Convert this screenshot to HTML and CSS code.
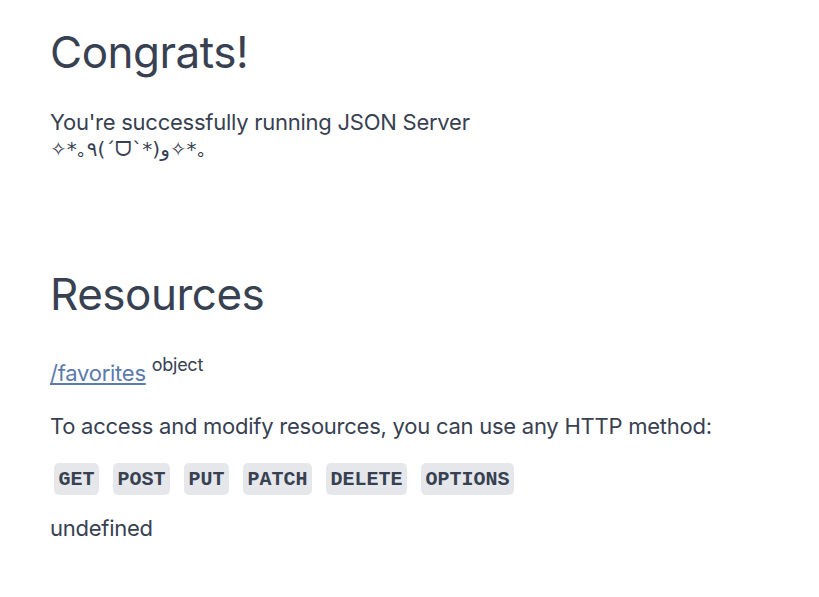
FILE: index.html
```
<!DOCTYPE html>
<html lang="en">
<head>
<meta charset="utf-8">
<title>JSON Server</title>
<link rel="stylesheet" href="styles.css">
</head>
<body>
<main class="page">
  <h1 class="title">Congrats!</h1>
  <p class="lead">You're successfully running JSON Server<br><span class="kaomoji">✧*｡٩(ˊᗜˋ*)و✧*｡</span></p>
  <h2 class="title section">Resources</h2>
  <p class="resource"><a class="link" href="favorites">/favorites</a> <sup class="type">object</sup></p>
  <p class="text access">To access and modify resources, you can use any HTTP method:</p>
  <div class="methods">
    <code class="method">GET</code>
    <code class="method">POST</code>
    <code class="method">PUT</code>
    <code class="method">PATCH</code>
    <code class="method">DELETE</code>
    <code class="method">OPTIONS</code>
  </div>
  <p class="text last">undefined</p>
</main>
</body>
</html>
```
FILE: styles.css
```
html, body {
  margin: 0;
  padding: 0;
  background: #ffffff;
}
body {
  font-family: Inter, "Noto Sans", "DejaVu Sans", sans-serif;
  color: #374151;
  font-size: 22px;
  line-height: 26px;
  letter-spacing: -0.25px;
}
.page {
  padding: 0 50px;
}
.title {
  font-size: 44px;
  font-weight: 400;
  line-height: 52.8px;
  letter-spacing: -0.5px;
  margin: 26px 0 0;
}
.section {
  margin-top: 107px;
}
.lead {
  margin: 30px 0 0;
}
.kaomoji {
  font-family: "DejaVu Sans", "Noto Sans", sans-serif;
  font-size: 20px;
  line-height: 20px;
  letter-spacing: 0;
}
.resource {
  margin: 39px 0 0;
}
.link {
  color: #5b7aae;
  text-decoration: underline;
}
.type {
  font-size: 18px;
  line-height: 0;
  vertical-align: 10px;
}
.access {
  margin: 27px 0 0;
}
.methods {
  display: flex;
  flex-wrap: wrap;
  gap: 14px;
  margin: 24px 0 0;
  padding-left: 4px;
}
.method {
  font-family: "Liberation Mono", monospace;
  font-weight: 700;
  font-size: 20px;
  line-height: 20px;
  letter-spacing: 0;
  background: #e5e7eb;
  border-radius: 5px;
  padding: 7px 4.5px 5px;
  color: #374151;
}
.last {
  margin: 20px 0 0;
}
```
